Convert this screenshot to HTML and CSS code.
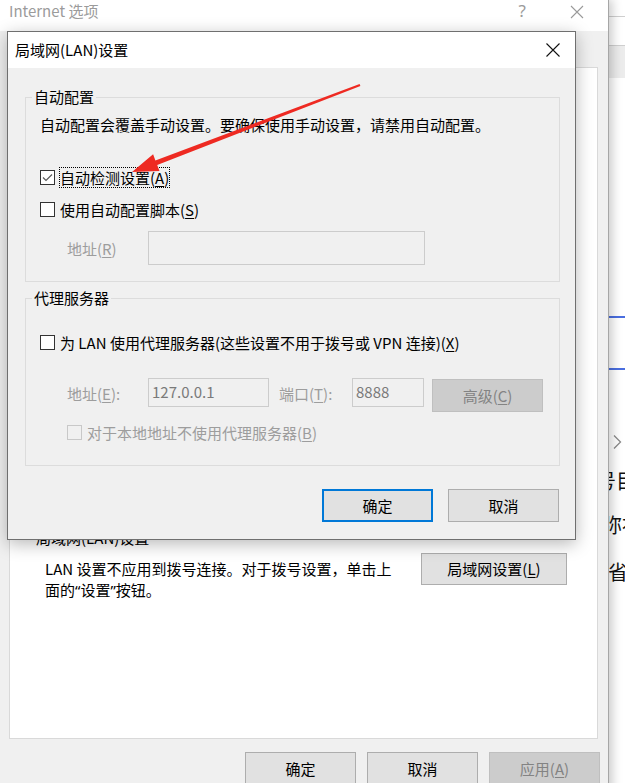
FILE: index.html
```html
<!DOCTYPE html>
<html lang="zh-CN">
<head>
<meta charset="utf-8">
<title>局域网(LAN)设置</title>
<link rel="stylesheet" href="styles.css">
</head>
<body>
<div class="desktop">

  <div class="side-window">
    <div class="s-line1"></div>
    <div class="s-line2"></div>
    <div class="s-band"></div>
    <div class="s-blue s-blue1"></div>
    <div class="s-blue s-blue2"></div>
    <svg class="s-chevron" width="10" height="16" viewBox="0 0 10 16"><path d="M2 1.5 L8.5 8 L2 14.5" fill="none" stroke="#8a8a8a" stroke-width="1.3"/></svg>
    <div class="s-text s-t1">号目</div>
    <div class="s-text s-t2">弥补</div>
    <div class="s-text s-t3">省份</div>
  </div>

  <div class="main-window">
    <div class="main-titlebar">
      <span class="main-title">Internet 选项</span>
      <span class="main-help">?</span>
      <svg class="main-close" width="14" height="14" viewBox="0 0 14 14"><path d="M1 1 L13 13 M13 1 L1 13" stroke="#9a9a9a" stroke-width="1.1"/></svg>
    </div>
    <div class="main-body">
      <div class="panel">
        <div class="lan-section">
          <div class="section-title">局域网(LAN)设置</div>
          <div class="lan-row">
            <p class="lan-text">LAN 设置不应用到拨号连接。对于拨号设置，单击上<br>面的<span class="q">“</span>设置<span class="q">”</span>按钮。</p>
            <button class="btn lan-btn">局域网设置(<u>L</u>)</button>
          </div>
        </div>
      </div>
      <div class="main-actions">
        <button class="btn act-btn">确定</button>
        <button class="btn act-btn">取消</button>
        <button class="btn act-btn disabled">应用(<u>A</u>)</button>
      </div>
    </div>
  </div>

  <div class="dialog">
    <div class="dlg-titlebar">
      <span class="dlg-title">局域网(LAN)设置</span>
      <svg class="dlg-close" width="14" height="14" viewBox="0 0 14 14"><path d="M0.5 0.5 L13.5 13.5 M13.5 0.5 L0.5 13.5" stroke="#111" stroke-width="1.1"/></svg>
    </div>
    <div class="dlg-body">
      <fieldset class="group group-auto">
        <legend>自动配置</legend>
        <div class="group-inner auto-inner">
          <div class="desc">自动配置会覆盖手动设置。要确保使用手动设置，请禁用自动配置。</div>
          <div class="cb-row cb-row1">
            <span class="cb checked"><svg width="13" height="13" viewBox="0 0 13 13"><path d="M2 6.5 L5 9.5 L11 3.5" fill="none" stroke="#5a5a5a" stroke-width="1.2"/></svg></span>
            <span class="cb-label focus">自动检测设置(<u>A</u>)</span>
          </div>
          <div class="cb-row cb-row2">
            <span class="cb"></span>
            <span class="cb-label">使用自动配置脚本(<u>S</u>)</span>
          </div>
          <div class="addr-row">
            <span class="field-label dim">地址(<u>R</u>)</span>
            <div class="input input-script"></div>
          </div>
        </div>
      </fieldset>

      <fieldset class="group group-proxy">
        <legend>代理服务器</legend>
        <div class="group-inner proxy-inner">
          <div class="cb-row cb-row3">
            <span class="cb"></span>
            <span class="cb-label">为 LAN 使用代理服务器(这些设置不用于拨号或 VPN 连接)(<u>X</u>)</span>
          </div>
          <div class="proxy-row">
            <span class="field-label dim addr-label">地址(<u>E</u>):</span>
            <div class="input input-addr">127.0.0.1</div>
            <span class="field-label dim port-label">端口(<u>T</u>):</span>
            <div class="input input-port">8888</div>
            <button class="btn adv-btn disabled">高级(<u>C</u>)</button>
          </div>
          <div class="cb-row cb-row4">
            <span class="cb disabled-cb"></span>
            <span class="cb-label dim">对于本地地址不使用代理服务器(<u>B</u>)</span>
          </div>
        </div>
      </fieldset>

      <div class="dlg-actions">
        <button class="btn dlg-btn default">确定</button>
        <button class="btn dlg-btn">取消</button>
      </div>
    </div>
  </div>

  <svg class="arrow" width="625" height="783" viewBox="0 0 625 783">
    <polygon fill="#ee2a22" points="360.4,85.9 157.2,165.0 159.5,171.1 132,172 153.1,154.3 155.4,160.4 359.6,84.1"/>
  </svg>
</div>
</body>
</html>
```

FILE: styles.css
```css
* { box-sizing: border-box; }

html, body {
  margin: 0;
  padding: 0;
}

body {
  width: 625px;
  height: 783px;
  overflow: hidden;
  background: #ffffff;
  font-family: "Noto Sans CJK SC", "Noto Sans", sans-serif;
  font-size: 15px;
  color: #000;
}

u { text-decoration: underline; text-underline-offset: 2px; text-decoration-thickness: 1px; }

.q { font-family: "Noto Sans", sans-serif; }

.desktop {
  position: relative;
  width: 625px;
  height: 783px;
  overflow: hidden;
}

/* ---------- window behind on the right ---------- */
.side-window {
  position: absolute;
  left: 540px;
  top: 0;
  width: 120px;
  height: 783px;
  background: #fff;
}
.s-line1 { height: 17px; border-bottom: 1px solid #cfcfcf; }
.s-line2 { height: 29px; border-bottom: 1px solid #cfcfcf; }
.s-band { height: 32px; background: #ececec; }
.s-blue { height: 2px; background: #4a6ee0; }
.s-blue1 { margin-top: 238px; }
.s-blue2 { margin-top: 50px; }
.s-chevron { display: block; margin: 64px 0 0 72px; }
.s-text {
  font-size: 20px;
  line-height: 24px;
  padding-left: 62px;
  white-space: nowrap;
  color: #111;
}
.s-t1 { margin-top: 19px; padding-left: 56px; }
.s-t2 { margin-top: 20px; }
.s-t3 { margin-top: 23px; padding-left: 68px; }

/* ---------- Internet options window ---------- */
.main-window {
  position: absolute;
  left: -1px;
  top: -1px;
  width: 610px;
  height: 800px;
  border: 1px solid #a6a6a6;
  background: #f0f0f0;
  box-shadow: 3px 0 10px rgba(0, 0, 0, 0.22);
  display: flex;
  flex-direction: column;
}

.main-titlebar {
  height: 31px;
  background: #fff;
  display: flex;
  align-items: flex-start;
  padding: 1px 0 0 9px;
}
.main-title {
  font-size: 15px;
  line-height: 20px;
  color: #9b9b9b;
}
.main-help {
  margin-left: auto;
  font-size: 17px;
  line-height: 20px;
  color: #9b9b9b;
  font-family: "Noto Sans", sans-serif;
}
.main-close {
  margin: 4px 24px 0 44px;
}

.main-body {
  flex: 1;
  display: flex;
  flex-direction: column;
}

.panel {
  margin: 36px 0 0 9px;
  width: 589px;
  height: 672px;
  background: #fff;
  border: 1px solid #d9d9d9;
  padding: 460px 30px 0 26px;
}

.section-title {
  line-height: 20px;
}
.lan-row {
  display: flex;
  justify-content: space-between;
  align-items: flex-start;
  margin-top: 5px;
}
.lan-text {
  margin: 0;
  padding: 5px 0 0 9px;
  line-height: 21px;
}
.lan-btn {
  width: 146px;
  height: 32px;
}

.main-actions {
  display: flex;
  justify-content: flex-end;
  gap: 11px;
  margin-top: 13px;
  padding-right: 8px;
}
.act-btn {
  width: 111px;
  height: 33px;
}

/* ---------- buttons ---------- */
.btn {
  font-family: inherit;
  font-size: 15px;
  color: #000;
  background: #e1e1e1;
  border: 1px solid #adadad;
  padding: 0;
  margin: 0;
  line-height: 20px;
}
.btn.disabled {
  background: #cccccc;
  border-color: #bfbfbf;
  color: #838383;
}
.btn.default {
  border: 2px solid #0078d7;
}

/* ---------- LAN dialog ---------- */
.dialog {
  position: absolute;
  left: 7px;
  top: 31px;
  width: 569px;
  height: 509px;
  background: #f0f0f0;
  border: 1px solid #6f6f6f;
  box-shadow: 0 4px 16px rgba(0, 0, 0, 0.28);
  display: flex;
  flex-direction: column;
}

.dlg-titlebar {
  height: 36px;
  background: #fff;
  display: flex;
  align-items: center;
  padding-left: 7px;
}
.dlg-title {
  font-size: 15px;
  line-height: 22px;
}
.dlg-close {
  margin-left: auto;
  margin-right: 15px;
}

.dlg-body {
  padding: 0 15px 0 17px;
  display: flex;
  flex-direction: column;
}

.group {
  margin: 0;
  padding: 0;
  border: 1px solid #dcdcdc;
  min-width: 0;
}
.group legend {
  margin-left: 6px;
  padding: 0 2px;
  line-height: 20px;
  font-size: 15px;
}
.group-auto { margin-top: 19px; }
.group-proxy { margin-top: 6px; }

.group-inner {
  padding-left: 14px;
}
.auto-inner { padding-top: 8px; padding-bottom: 16px; }
.proxy-inner { padding-top: 24px; padding-bottom: 22px; }

.desc { line-height: 20px; }

.cb-row {
  display: flex;
  align-items: center;
  height: 21px;
}
.cb-row1 { margin-top: 32px; }
.cb-row2 { margin-top: 11px; }
.cb-row4 { margin-top: 10px; margin-left: 27px; }

.cb {
  width: 15px;
  height: 15px;
  border: 1px solid #333;
  background: #fff;
  display: flex;
  align-items: center;
  justify-content: center;
  flex: none;
}
.cb.disabled-cb {
  border-color: #c8c8c8;
  background: #f0f0f0;
}
.cb-label {
  margin-left: 4px;
  border: 1px solid transparent;
  line-height: 19px;
  white-space: nowrap;
}
.cb-label.focus {
  border: 1px dotted #000;
}

.dim { color: #9d9d9d; }

.addr-row {
  display: flex;
  align-items: center;
  margin-top: 11px;
  padding-left: 27px;
}
.field-label {
  width: 81px;
  flex: none;
  white-space: nowrap;
}
.input {
  border: 1px solid #cccccc;
  background: #f0f0f0;
  color: #7a7a7a;
  padding-left: 3px;
  line-height: 25px;
}
.input-script {
  width: 277px;
  height: 34px;
}

.proxy-row {
  display: flex;
  align-items: flex-start;
  margin-top: 25px;
  padding-left: 27px;
}
.proxy-row .field-label {
  line-height: 29px;
  padding-top: 1px;
}
.input-addr { width: 121px; height: 29px; }
.port-label { width: 73px; margin-left: 10px; }
.input-port { width: 72px; height: 29px; }
.adv-btn {
  width: 111px;
  height: 33px;
  margin: 1px 0 0 8px;
}

.dlg-actions {
  display: flex;
  justify-content: flex-end;
  gap: 15px;
  margin-top: 23px;
  padding-right: 1px;
}
.dlg-btn {
  width: 111px;
  height: 33px;
}

/* ---------- annotation arrow ---------- */
.arrow {
  position: absolute;
  left: 0;
  top: 0;
  pointer-events: none;
}
```
